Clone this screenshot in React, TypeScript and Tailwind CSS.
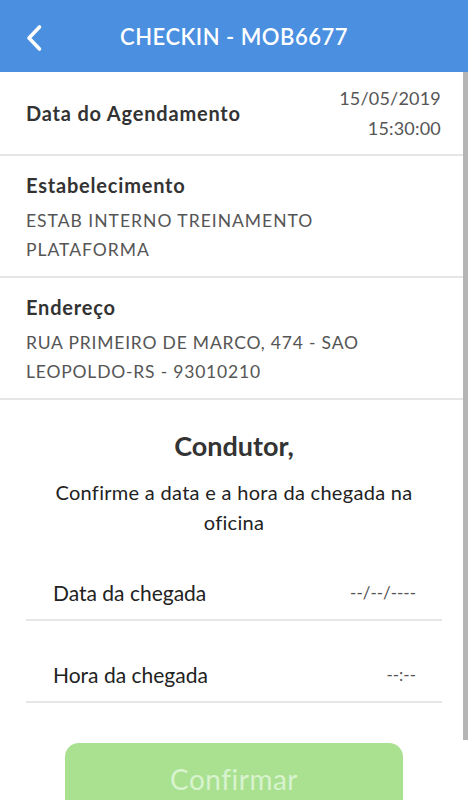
import React from "react";

function Field({ label, value }: { label: string; value: string }) {
  return (
    <div className="mx-[26px] flex h-[82px] items-end justify-between border-b-2 border-[#e6e6e6] pb-[14px] pl-[27px] pr-[26px]">
      <span className="text-[21px] leading-[24px] text-[#222]">{label}</span>
      <span className="text-[17px] leading-[24px] text-[#555]">{value}</span>
    </div>
  );
}

export default function App() {
  return (
    <div className="relative h-[800px] w-[468px] overflow-hidden bg-white font-['Lato',sans-serif]">
      <header className="relative flex h-[72px] items-center justify-center bg-[#4A8FE0]">
        <svg
          className="absolute left-[24px] top-[23px]"
          width="20"
          height="30"
          viewBox="0 0 20 30"
          fill="none"
        >
          <path
            d="M15.5 4 L5 15 L15.5 26"
            stroke="white"
            strokeWidth="3.6"
            strokeLinecap="round"
            strokeLinejoin="round"
          />
        </svg>
        <h1 className="text-[22px] font-semibold tracking-[0.5px] text-white">
          CHECKIN - MOB6677
        </h1>
      </header>

      <div className="flex h-[84px] items-center justify-between border-b-2 border-[#e6e6e6] px-[26px] pr-[27px]">
        <span className="text-[20px] font-bold tracking-[0.8px] text-[#333]">Data do Agendamento</span>
        <div className="text-right text-[18px] leading-[30px] tracking-[0.2px] text-[#555]">
          <div>15/05/2019</div>
          <div>15:30:00</div>
        </div>
      </div>

      <div className="border-b-2 border-[#e6e6e6] px-[26px] pb-[12px] pt-[15px]">
        <div className="text-[20px] font-bold leading-[29px] tracking-[0.8px] text-[#333]">Estabelecimento</div>
        <div className="mt-[6px] text-[17.5px] uppercase leading-[29px] tracking-[1px] text-[#555]">
          <div>ESTAB INTERNO TREINAMENTO</div>
          <div>PLATAFORMA</div>
        </div>
      </div>

      <div className="border-b-2 border-[#e6e6e6] px-[26px] pb-[12px] pt-[15px]">
        <div className="text-[20px] font-bold leading-[29px] tracking-[0.8px] text-[#333]">Endereço</div>
        <div className="mt-[6px] text-[17.5px] uppercase leading-[29px] tracking-[0.8px] text-[#555]">
          <div>RUA PRIMEIRO DE MARCO, 474 - SAO</div>
          <div>LEOPOLDO-RS - 93010210</div>
        </div>
      </div>

      <h2 className="mt-[30px] text-center text-[27px] font-bold leading-[32px] text-[#333]">
        Condutor,
      </h2>
      <p className="mb-[2px] mt-[15px] px-[50px] text-center text-[20px] leading-[30px] tracking-[0.3px] text-[#222]">
        Confirme a data e a hora da chegada na oficina
      </p>

      <Field label="Data da chegada" value="--/--/----" />
      <Field label="Hora da chegada" value="--:--" />

      <div className="mx-auto mt-[40px] flex h-[72px] w-[338px] items-center justify-center rounded-[14px] bg-[#A9E191]">
        <span className="text-[28px] tracking-[0.5px] text-[#D8F3CE]">Confirmar</span>
      </div>

      <div className="absolute right-0 top-[72px] h-[668px] w-[5px] bg-[#b5b5b5]" />
    </div>
  );
}
